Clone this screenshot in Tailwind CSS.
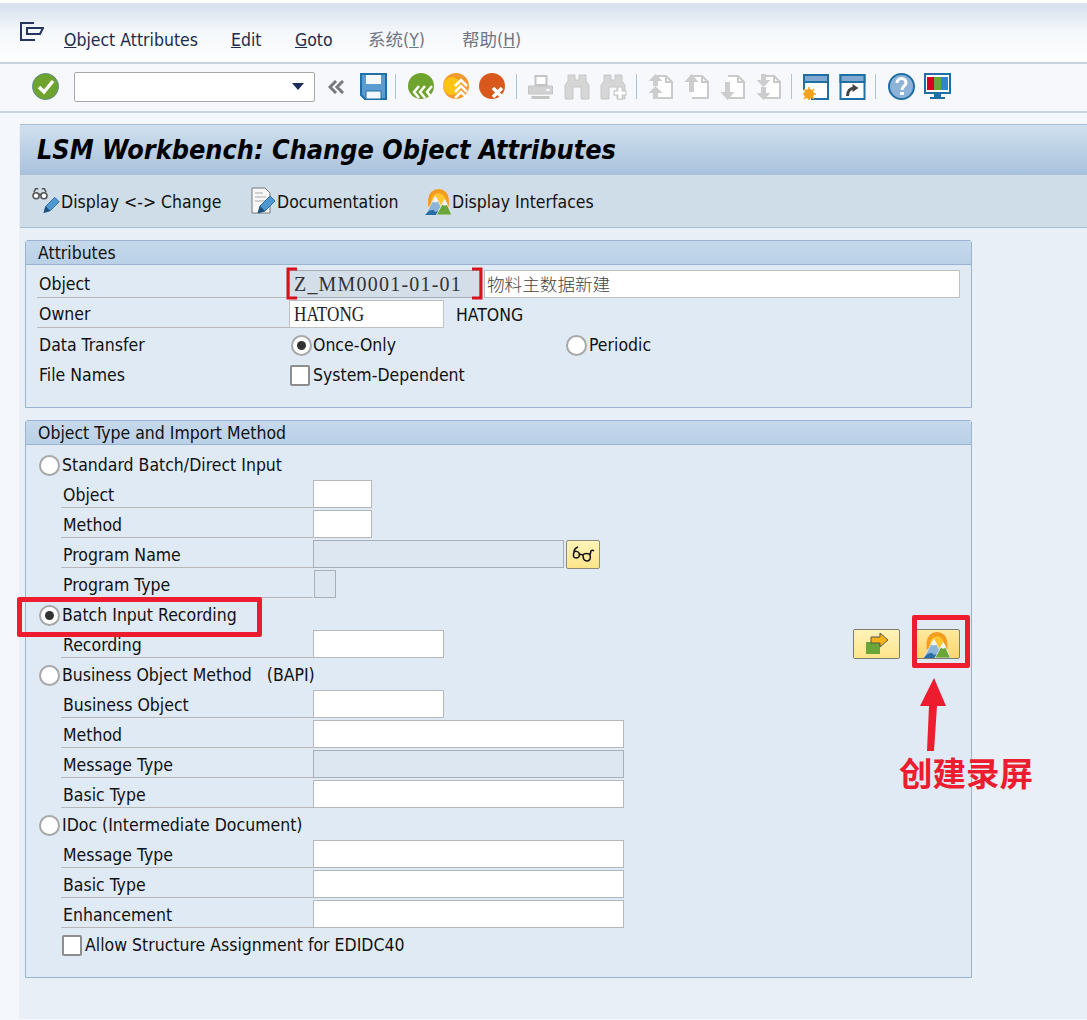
<!DOCTYPE html>
<html lang="en">
<head>
  <meta charset="UTF-8" />
  <title>LSM Workbench: Change Object Attributes</title>
  <script src="https://cdn.jsdelivr.net/npm/@tailwindcss/browser@4"></script>
</head>
<body class="relative h-[1020px] w-[1087px] overflow-hidden bg-[#f4f7fc] font-['DejaVu_Sans','Noto_Sans_CJK_SC',sans-serif] font-stretch-condensed text-[17.5px] text-[#111]">
  <svg class="absolute h-0 w-0">
    <defs>
      <symbol id="sun" viewBox="0 0 26 26">
        <path d="M3 18V11a10 10 0 0 1 20 0v7z" fill="#f39c1f"/>
        <path d="M6 13a7 8 0 0 1 14 0v5H6z" fill="#fdc62c"/>
        <path d="M0 26 10 8l6 11v7z" fill="#8db5d8" stroke="#e6edf3" stroke-width=".8"/>
        <path d="M0 26h15l-2-4-3 1-2-2-4 1z" fill="#2a6ea6"/>
        <path d="M11 26l8-15 7 15z" fill="#6aa53a" stroke="#e6edf3" stroke-width=".8"/>
        <path d="M19 11l3 5-3 1-3-1z" fill="#f2f5f7"/>
        <path d="M10 8l3 5-3 1-3-1z" fill="#f2f5f7"/>
      </symbol>
      <symbol id="pen" viewBox="0 0 20 20">
        <path d="M1 19l2-7L13 2l5 5L8 17z" fill="#4f97cf" stroke="#2a6ea6"/>
        <path d="M1 19l2-7 5 5z" fill="#1f4e79"/>
      </symbol>
      <symbol id="printer" viewBox="0 0 26 26">
        <path d="M8 2h11v9H8z" fill="#fff" stroke="#c4c4c4" stroke-width="2"/>
        <path d="M1 12h24v8H1z" fill="#d2d2d2" stroke="#c4c4c4"/>
        <path d="M4 22h18v3H4z" fill="#c4c4c4"/>
        <path d="M19 15h3v2h-3z" fill="#fff"/>
      </symbol>
      <symbol id="binoc" viewBox="0 0 26 26">
        <path d="M4 1h7v5h4V1h7v6l3 4v14h-8V13h-8v12H1V11l3-4z" fill="#d6d6d6" stroke="#c6c6c6"/>
      </symbol>
      <symbol id="page" viewBox="0 0 26 26">
        <path d="M8 2h10l6 6v16H8" fill="#fff" stroke="#cacaca" stroke-width="2"/>
        <path d="M18 2v6h6" fill="none" stroke="#cacaca" stroke-width="2"/>
      </symbol>
    </defs>
  </svg>

  <!-- menu bar -->
  <div class="h-[3px] bg-white"></div>
  <div class="h-[2px] bg-[#dbe3ee]"></div>
  <div class="flex h-[57px] items-center bg-gradient-to-b from-[#d6e1ef] via-[#f4f7fb] via-45% to-white pl-[20px] pt-[13px]">
    <svg class="-mt-[17px] h-[19px] w-[24px]" viewBox="0 0 24 19" fill="none" stroke="#24345f" stroke-width="2">
      <path d="M14 1H1v17h14"/><path d="M7 6h16l-3 6H7z"/>
    </svg>
    <nav class="ml-[20px] flex items-center text-[#1d2c4e]">
      <span class="w-[167px]"><u>O</u>bject Attributes</span>
      <span class="w-[64px]"><u>E</u>dit</span>
      <span class="w-[73px]"><u>G</u>oto</span>
      <span class="w-[94px] text-[#6f7686]">系统(<u>Y</u>)</span>
      <span class="text-[#6f7686]">帮助(<u>H</u>)</span>
    </nav>
  </div>
  <div class="h-[2px] bg-[#c8d2df]"></div>

  <!-- system toolbar -->
  <div class="flex h-[47px] items-center bg-[#f6f8fc] pb-[2px] pl-[32px]">
    <svg class="h-[27px] w-[27px]" viewBox="0 0 27 27"><circle cx="13.5" cy="13.5" r="13" fill="#6ea32e" stroke="#5b8a8a"/><path d="M7 14l5 5 9-11" fill="none" stroke="#fff" stroke-width="3.5"/></svg>
    <div class="ml-[15px] flex h-[30px] w-[241px] items-center justify-end rounded-[2px] border border-[#a8a8a8] bg-white pr-[10px]">
      <svg class="h-[7px] w-[12px]" viewBox="0 0 12 7"><path d="M0 0h12L6 7z" fill="#1f2d5a"/></svg>
    </div>
    <svg class="ml-[13px] h-[14px] w-[17px]" viewBox="0 0 17 14" fill="none" stroke="#77797d" stroke-width="3"><path d="M8 1 2 7l6 6M15 1 9 7l6 6"/></svg>
    <svg class="ml-[15px] h-[27px] w-[27px]" viewBox="0 0 27 27"><path d="M1 1h25v25H5l-4-4z" fill="#5c9bd0" stroke="#1f6fa5" stroke-width="2"/><path d="M6 2h15v9H6z" fill="#f4f8fc"/><path d="M6 18h15v8H6z" fill="#f4f8fc" stroke="#1f6fa5"/></svg>
    <div class="ml-[8px] h-[25px] w-px bg-[#a9c5dd]"></div>
    <svg class="ml-[12px] h-[27px] w-[27px]" viewBox="0 0 27 27"><circle cx="13" cy="13" r="13" fill="#6ea32e"/><path d="M11 13l-5 6 5 6M17 13l-5 6 5 6M24 13l-5 6 5 6" fill="none" stroke="#fff" stroke-width="2.5"/></svg>
    <svg class="ml-[8px] h-[27px] w-[27px]" viewBox="0 0 27 27"><circle cx="13" cy="13" r="13" fill="#f29a2e"/><circle cx="9" cy="13" r="9" fill="#ffc312"/><path d="M12 13l6-6 6 6M12 19l6-6 6 6M12 25l6-6 6 6" fill="none" stroke="#fff" stroke-width="2.5"/></svg>
    <svg class="ml-[9px] h-[27px] w-[27px]" viewBox="0 0 27 27"><circle cx="13" cy="13" r="13" fill="#d9581d"/><path d="M14 15l9 9M23 15l-9 9" stroke="#fff" stroke-width="3.5"/></svg>
    <div class="ml-[10px] h-[25px] w-px bg-[#a9c5dd]"></div>
    <svg class="ml-[10px] h-[26px] w-[27px]"><use href="#printer"/></svg>
    <svg class="ml-[10px] h-[26px] w-[26px]"><use href="#binoc"/></svg>
    <div class="relative ml-[10px] h-[26px] w-[27px]">
      <svg class="h-[26px] w-[26px]"><use href="#binoc"/></svg>
      <svg class="absolute bottom-0 right-0 h-[14px] w-[14px]" viewBox="0 0 13 13"><path d="M4.500 1h4v3.500H12v4H8.500V12h-4V8.500H1v-4h3.500z" fill="#fff" stroke="#c6c6c6"/></svg>
    </div>
    <div class="ml-[9px] h-[25px] w-px bg-[#a9c5dd]"></div>
    <div class="relative ml-[11px] h-[26px] w-[26px]">
      <svg class="h-[26px] w-[26px]"><use href="#page"/></svg>
      <svg class="absolute left-0 top-0 h-[26px] w-[15px]" viewBox="0 0 15 26" fill="#cdcdcd"><path d="M7.500 0l7 7H10v5H5V7H.5zM7.500 12l7 7H10v6H5v-6H.5z"/></svg>
    </div>
    <div class="relative ml-[10px] h-[26px] w-[26px]">
      <svg class="h-[26px] w-[26px]"><use href="#page"/></svg>
      <svg class="absolute left-0 top-0 h-[18px] w-[15px]" viewBox="0 0 15 18" fill="#cdcdcd"><path d="M7.500 0l7 8H10v10H5V8H.5z"/></svg>
    </div>
    <div class="relative ml-[10px] h-[26px] w-[26px]">
      <svg class="h-[26px] w-[26px]"><use href="#page"/></svg>
      <svg class="absolute bottom-0 left-0 h-[18px] w-[15px]" viewBox="0 0 15 18" fill="#cdcdcd"><path d="M5 0h5v10h4.500l-7 8-7-8H5z"/></svg>
    </div>
    <div class="relative ml-[10px] h-[26px] w-[26px]">
      <svg class="h-[26px] w-[26px]"><use href="#page"/></svg>
      <svg class="absolute left-0 top-0 h-[26px] w-[15px]" viewBox="0 0 15 26" fill="#cdcdcd"><path d="M5 0h5v6h4.500l-7 7-7-7H5zM5 13h5v6h4.500l-7 7-7-7H5z"/></svg>
    </div>
    <div class="ml-[9px] h-[25px] w-px bg-[#a9c5dd]"></div>
    <div class="relative ml-[11px] h-[26px] w-[27px]">
      <svg class="h-[26px] w-[26px]" viewBox="0 0 26 26"><path d="M1 1h24v24H8" fill="#fff" stroke="#1f6fa5" stroke-width="2"/><path d="M1 1h24v7H1z" fill="#7fa9d0" stroke="#1f6fa5" stroke-width="2"/><path d="M1 8v8" stroke="#1f6fa5" stroke-width="2"/><circle cx="6" cy="20" r="5" fill="#f5a31a"/><path d="M6 13v14M-1 20h14M1 15l10 10M11 15 1 25" stroke="#f5a31a" stroke-width="1.500"/></svg>
    </div>
    <svg class="ml-[9px] h-[26px] w-[27px]" viewBox="0 0 26 26"><path d="M1 1h24v24H1z" fill="#fff" stroke="#1f6fa5" stroke-width="2"/><path d="M1 1h24v7H1z" fill="#7fa9d0" stroke="#1f6fa5" stroke-width="2"/><path d="M8 22c0-5 3-8 7-8" fill="none" stroke="#444" stroke-width="3"/><path d="M13 10l6 4-6 4z" fill="#444"/></svg>
    <div class="ml-[9px] h-[25px] w-px bg-[#a9c5dd]"></div>
    <svg class="ml-[12px] h-[27px] w-[27px]" viewBox="0 0 27 27"><circle cx="13.5" cy="13.5" r="12.5" fill="#8db4d8" stroke="#1f6fa5" stroke-width="2"/><path d="M9 10c0-6 9-6 9 0 0 3-4 3-4 7" fill="none" stroke="#fff" stroke-width="3"/><path d="M12 19h4v3h-4z" fill="#fff"/></svg>
    <svg class="ml-[9px] h-[27px] w-[27px]" viewBox="0 0 27 27"><path d="M1 1h25v19H1z" fill="#fff" stroke="#1f6fa5" stroke-width="2"/><path d="M3 4h7v13H3z" fill="#d5001f"/><path d="M10 4h7v13h-7z" fill="#6aa53a"/><path d="M17 4h7v13h-7z" fill="#2f86c9"/><path d="M10 21h7v3h-7zM6 24h15v2H6z" fill="#1f6fa5"/></svg>
  </div>
  <div class="h-[2px] bg-[#c8d2df]"></div>

  <!-- main screen -->
  <div class="ml-[19px] mt-[11px] h-[895px] bg-[#e8eff7]">
    <div class="ml-px flex h-[51px] items-center border-y border-[#a9bfd6] bg-gradient-to-b from-[#d0e0ef] to-[#a9c2dc] pl-[17px] pt-[2px] text-[26.8px] font-bold italic text-black">LSM Workbench: Change Object Attributes</div>
    <div class="ml-px flex h-[53px] items-center border-b border-[#a9bfd6] bg-[#cfdde9] pl-[12px]">
      <span class="flex w-[219px] items-center">
        <span class="relative h-[28px] w-[29px]">
          <svg class="absolute left-0 top-0 h-[14px] w-[16px]" viewBox="0 0 18 16" fill="#fff" stroke="#555" stroke-width="1.8"><circle cx="4.500" cy="10" r="3.500"/><circle cx="13.500" cy="10" r="3.500"/><path d="M8 9c1-1 1-1 2 0M2 6l2-4h3M16 6l-2-4h-3" fill="none"/></svg>
          <svg class="absolute bottom-0 right-0 h-[21px] w-[18px]"><use href="#pen"/></svg>
        </span>
        <span class="pt-[2px]">Display &lt;-&gt; Change</span>
      </span>
      <span class="flex w-[174px] items-center">
        <span class="relative h-[28px] w-[26px]">
          <svg class="absolute left-0 top-0 h-[27px] w-[20px]" viewBox="0 0 20 27"><path d="M1 1h13l5 5v20H1z" fill="#f7f7f7" stroke="#777"/><path d="M4 6h8M4 10h11M4 14h11" stroke="#aaa"/></svg>
          <svg class="absolute bottom-0 right-0 h-[22px] w-[20px]"><use href="#pen"/></svg>
        </span>
        <span class="pt-[2px]">Documentation</span>
      </span>
      <span class="flex items-center">
        <svg class="h-[27px] w-[27px]"><use href="#sun"/></svg>
        <span class="pt-[2px]">Display Interfaces</span>
      </span>
    </div>

    <!-- Attributes panel -->
    <section class="ml-[6px] mt-[12px] h-[168px] w-[947px] rounded-t-[3px] border border-[#9ab4d0] bg-[#dfeaf5]">
      <h2 class="flex h-[24px] items-center border-b border-[#9ab4d0] bg-gradient-to-b from-[#c6d9ec] to-[#b9d0e7] pl-[12px] pt-[2px]">Attributes</h2>
      <div class="pl-[11px] pt-[4px]">
        <div class="flex h-[30px] items-center">
          <span class="flex h-[28px] w-[252px] items-center border-b border-[#b8b8b8] pl-[2px] pt-[2px]">Object</span>
          <span class="flex h-[28px] w-[191px] items-center border border-[#a5adb5] bg-[#d3dee9] pl-[4px] font-['Liberation_Serif'] font-stretch-normal text-[20px] tracking-[1.2px] text-[#333]">Z_MM0001-01-01</span>
          <span class="ml-[4px] flex h-[28px] w-[476px] items-center border border-[#c0c0c0] bg-white pl-[2px] font-['Noto_Sans_CJK_SC'] text-[17.6px] font-light text-[#444]">物料主数据新建</span>
        </div>
        <div class="flex h-[30px] items-center">
          <span class="flex h-[28px] w-[252px] items-center border-b border-[#b8b8b8] pl-[2px] pt-[2px]">Owner</span>
          <span class="flex h-[28px] w-[155px] items-center border border-[#c0c0c0] bg-white pl-[4px] font-['Liberation_Serif'] font-stretch-normal text-[20px] text-[#222]"><span class="origin-left scale-x-[0.857]">HATONG</span></span>
          <span class="ml-[12px] pt-[2px]">HATONG</span>
        </div>
        <div class="flex h-[30px] items-center pt-[2px]">
          <span class="w-[252px] pl-[2px]">Data Transfer</span>
          <span class="flex w-[277px] items-center">
            <span class="ml-[2px] mr-[1px] flex h-[21px] w-[21px] items-center justify-center rounded-full border-2 border-[#a8a8a8] bg-white"><span class="h-[9px] w-[9px] rounded-full bg-[#333]"></span></span>
            Once-Only
          </span>
          <span class="flex items-center">
            <span class="mr-[2px] h-[21px] w-[21px] rounded-full border-2 border-[#a8a8a8] bg-white"></span>
            Periodic
          </span>
        </div>
        <div class="flex h-[30px] items-center pt-[2px]">
          <span class="w-[252px] pl-[2px]">File Names</span>
          <span class="mr-[3px] ml-[1px] h-[21px] w-[20px] rounded-[2px] border-2 border-[#8e8e8e] bg-white"></span>
          System-Dependent
        </div>
      </div>
    </section>

    <!-- Object Type panel -->
    <section class="ml-[6px] mt-[12px] h-[558px] w-[947px] rounded-t-[3px] border border-[#9ab4d0] bg-[#dfeaf5]">
      <h2 class="flex h-[24px] items-center border-b border-[#9ab4d0] bg-gradient-to-b from-[#c6d9ec] to-[#b9d0e7] pl-[12px] pt-[2px]">Object Type and Import Method</h2>
      <div class="pl-[12px] pt-[4px]">
        <div class="flex h-[30px] items-center pt-[2px]">
          <span class="ml-px mr-[2px] h-[21px] w-[21px] rounded-full border-2 border-[#a8a8a8] bg-white"></span>
          Standard Batch/Direct Input
        </div>
        <div class="flex h-[30px] items-center pl-[23px]">
          <span class="flex h-[28px] w-[252px] items-center border-b border-[#b8b8b8] pl-[2px] pt-[4px]">Object</span>
          <span class="h-[28px] w-[59px] border border-[#b4b8bc] bg-white"></span>
        </div>
        <div class="flex h-[30px] items-center pl-[23px]">
          <span class="flex h-[28px] w-[252px] items-center border-b border-[#b8b8b8] pl-[2px] pt-[4px]">Method</span>
          <span class="h-[28px] w-[59px] border border-[#b4b8bc] bg-white"></span>
        </div>
        <div class="flex h-[30px] items-center pl-[23px]">
          <span class="flex h-[28px] w-[252px] items-center border-b border-[#b8b8b8] pl-[2px] pt-[4px]">Program Name</span>
          <span class="h-[28px] w-[251px] border border-[#a8aeb4] bg-[#dce7f2]"></span>
          <span class="ml-[2px] flex h-[29px] w-[34px] items-center justify-center rounded-[2px] border border-[#8a8a7a] bg-gradient-to-b from-[#fff3b8] to-[#fde58a]">
            <svg class="h-[18px] w-[25px]" viewBox="0 0 25 18" fill="none" stroke="#111" stroke-width="1.500"><path d="M3 7C2 10 2 13 5 13c3 0 4-2 3-5-1-2-4-2-5-1zM12 10c0 3 1 6 4 6 3 0 4-3 3-6-1-2-6-2-7 0zM8 9l4 1M3 7c0-2 1-4 4-5M19 10l1-4c1-1 2-1 3 0"/></svg>
          </span>
        </div>
        <div class="flex h-[30px] items-center pl-[23px]">
          <span class="flex h-[28px] w-[252px] items-center border-b border-[#b8b8b8] pl-[2px] pt-[4px]">Program Type</span>
          <span class="ml-[1px] h-[28px] w-[22px] border border-[#a8aeb4] bg-[#dce7f2]"></span>
        </div>
        <div class="flex h-[30px] items-center pt-[2px]">
          <span class="ml-px mr-[2px] flex h-[21px] w-[21px] items-center justify-center rounded-full border-2 border-[#a8a8a8] bg-white"><span class="h-[9px] w-[9px] rounded-full bg-[#333]"></span></span>
          Batch Input Recording
        </div>
        <div class="relative flex h-[30px] items-center pl-[23px]">
          <span class="flex h-[28px] w-[252px] items-center border-b border-[#b8b8b8] pl-[2px] pt-[4px]">Recording</span>
          <span class="h-[28px] w-[131px] border border-[#b4b8bc] bg-white"></span>
          <span class="ml-[409px] flex h-[30px] w-[47px] items-center justify-center rounded-[2px] border border-[#7c7c70] bg-gradient-to-b from-[#fff3b8] to-[#fde58a]">
            <svg class="h-[22px] w-[24px]" viewBox="0 0 24 22"><path d="M1 9h14v12H1z" fill="#6aa53a"/><path d="M6 4h9V0l8 7-8 7v-4H6z" fill="#f5b21a" stroke="#555"/></svg>
          </span>
          <span class="ml-[14px] flex h-[30px] w-[46px] items-center justify-center rounded-[2px] border border-[#7c7c70] bg-gradient-to-b from-[#ffe9a0] to-[#fdd56a]">
            <svg class="h-[27px] w-[28px]"><use href="#sun"/></svg>
          </span>
        </div>
        <div class="flex h-[30px] items-center pt-[2px]">
          <span class="ml-px mr-[2px] h-[21px] w-[21px] rounded-full border-2 border-[#a8a8a8] bg-white"></span>
          Business Object Method&nbsp;&nbsp; (BAPI)
        </div>
        <div class="flex h-[30px] items-center pl-[23px]">
          <span class="flex h-[28px] w-[252px] items-center border-b border-[#b8b8b8] pl-[2px] pt-[4px]">Business Object</span>
          <span class="h-[28px] w-[131px] border border-[#b4b8bc] bg-white"></span>
        </div>
        <div class="flex h-[30px] items-center pl-[23px]">
          <span class="flex h-[28px] w-[252px] items-center border-b border-[#b8b8b8] pl-[2px] pt-[4px]">Method</span>
          <span class="h-[28px] w-[311px] border border-[#b4b8bc] bg-white"></span>
        </div>
        <div class="flex h-[30px] items-center pl-[23px]">
          <span class="flex h-[28px] w-[252px] items-center border-b border-[#b8b8b8] pl-[2px] pt-[4px]">Message Type</span>
          <span class="h-[28px] w-[311px] border border-[#a8aeb4] bg-[#dce7f2]"></span>
        </div>
        <div class="flex h-[30px] items-center pl-[23px]">
          <span class="flex h-[28px] w-[252px] items-center border-b border-[#b8b8b8] pl-[2px] pt-[4px]">Basic Type</span>
          <span class="h-[28px] w-[311px] border border-[#b4b8bc] bg-white"></span>
        </div>
        <div class="flex h-[30px] items-center pt-[2px]">
          <span class="ml-px mr-[2px] h-[21px] w-[21px] rounded-full border-2 border-[#a8a8a8] bg-white"></span>
          IDoc (Intermediate Document)
        </div>
        <div class="flex h-[30px] items-center pl-[23px]">
          <span class="flex h-[28px] w-[252px] items-center border-b border-[#b8b8b8] pl-[2px] pt-[4px]">Message Type</span>
          <span class="h-[28px] w-[311px] border border-[#b4b8bc] bg-white"></span>
        </div>
        <div class="flex h-[30px] items-center pl-[23px]">
          <span class="flex h-[28px] w-[252px] items-center border-b border-[#b8b8b8] pl-[2px] pt-[4px]">Basic Type</span>
          <span class="h-[28px] w-[311px] border border-[#b4b8bc] bg-white"></span>
        </div>
        <div class="flex h-[30px] items-center pl-[23px]">
          <span class="flex h-[28px] w-[252px] items-center border-b border-[#b8b8b8] pl-[2px] pt-[4px]">Enhancement</span>
          <span class="h-[28px] w-[311px] border border-[#b4b8bc] bg-white"></span>
        </div>
        <div class="flex h-[30px] items-center pl-[24px] pt-[2px]">
          <span class="mr-[3px] h-[21px] w-[20px] rounded-[2px] border-2 border-[#8e8e8e] bg-white"></span>
          Allow Structure Assignment for EDIDC40
        </div>
      </div>
    </section>
  </div>

  <!-- annotations on top of the screenshot -->
  <svg class="absolute left-[286px] top-[267px] h-[33px] w-[197px]" viewBox="0 0 197 33" fill="none" stroke="#d8121c" stroke-width="3">
    <path d="M11 2H2v29h9M186 2h9v29h-9"/>
  </svg>
  <div class="absolute left-[17px] top-[597px] h-[40px] w-[245px] rounded-[2px] border-[5px] border-[#ed1c2e]"></div>
  <div class="absolute left-[912px] top-[615px] h-[53px] w-[58px] rounded-[2px] border-[5px] border-[#ed1c2e]"></div>
  <svg class="absolute left-[918px] top-[677px] h-[76px] w-[30px]" viewBox="0 0 30 76">
    <path d="M16 1 28 29h-9l-3 45h-7l2-45H2z" fill="#ed1c2e"/>
  </svg>
  <div class="absolute left-[899px] top-[748px] font-['Noto_Sans_CJK_SC'] text-[33.5px] font-bold leading-[48px] text-[#ed1c2e]">创建录屏</div>
</body>
</html>
